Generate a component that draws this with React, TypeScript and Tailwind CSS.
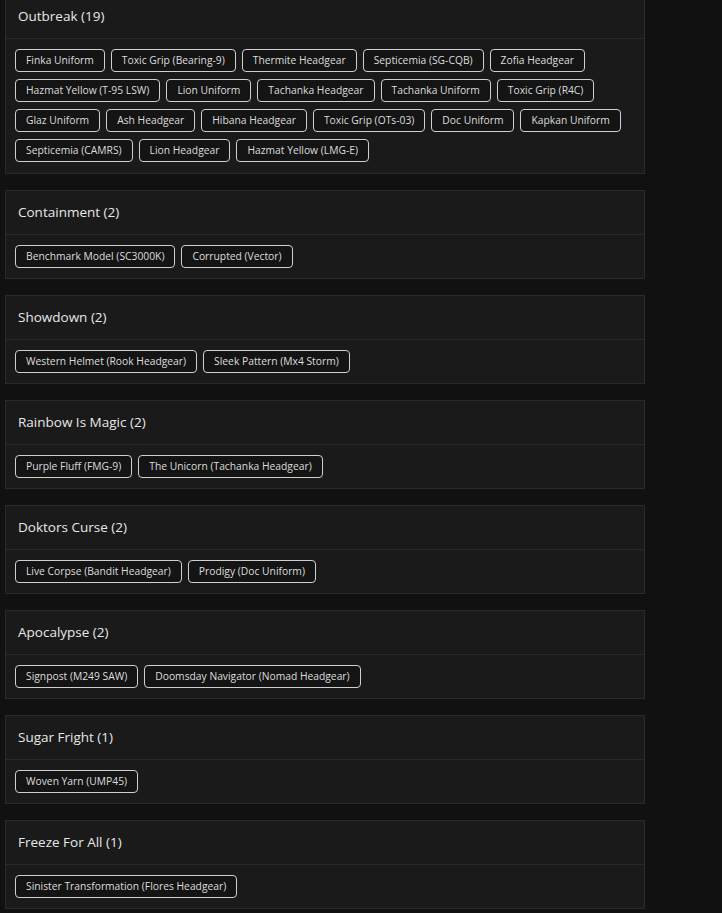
import React from "react";

const groups: { title: string; items: string[] }[] = [
  {
    title: "Outbreak (19)",
    items: [
      "Finka Uniform",
      "Toxic Grip (Bearing-9)",
      "Thermite Headgear",
      "Septicemia (SG-CQB)",
      "Zofia Headgear",
      "Hazmat Yellow (T-95 LSW)",
      "Lion Uniform",
      "Tachanka Headgear",
      "Tachanka Uniform",
      "Toxic Grip (R4C)",
      "Glaz Uniform",
      "Ash Headgear",
      "Hibana Headgear",
      "Toxic Grip (OTs-03)",
      "Doc Uniform",
      "Kapkan Uniform",
      "Septicemia (CAMRS)",
      "Lion Headgear",
      "Hazmat Yellow (LMG-E)",
    ],
  },
  { title: "Containment (2)", items: ["Benchmark Model (SC3000K)", "Corrupted (Vector)"] },
  { title: "Showdown (2)", items: ["Western Helmet (Rook Headgear)", "Sleek Pattern (Mx4 Storm)"] },
  { title: "Rainbow Is Magic (2)", items: ["Purple Fluff (FMG-9)", "The Unicorn (Tachanka Headgear)"] },
  { title: "Doktors Curse (2)", items: ["Live Corpse (Bandit Headgear)", "Prodigy (Doc Uniform)"] },
  { title: "Apocalypse (2)", items: ["Signpost (M249 SAW)", "Doomsday Navigator (Nomad Headgear)"] },
  { title: "Sugar Fright (1)", items: ["Woven Yarn (UMP45)"] },
  { title: "Freeze For All (1)", items: ["Sinister Transformation (Flores Headgear)"] },
];

export default function App() {
  return (
    <div
      className="min-h-[913px] w-full bg-[#111111] overflow-hidden"
      style={{ fontFamily: '"Open Sans", "Liberation Sans", sans-serif' }}
    >
      <div className="ml-[5px] mt-[-6px] flex w-[640px] flex-col gap-[16px]">
        {groups.map((g, i) => (
          <div key={g.title} className="border border-[#2a2a2a] bg-[#1a1a1a]">
            <div className="flex h-[44px] items-center border-b border-[#2a2a2a] px-[12px] text-[13.5px] font-medium text-[#e8e8e8]">
              {g.title}
            </div>
            <div
              className={
                i === 0
                  ? "flex flex-wrap gap-x-[6px] gap-y-[7px] px-[9px] pt-[10px] pb-[11px]"
                  : "flex flex-wrap gap-x-[6px] gap-y-[7px] px-[9px] py-[10px]"
              }
            >
              {g.items.map((it) => (
                <span
                  key={it}
                  className="flex h-[23px] items-center rounded-[4px] border border-[#cfcfcf] bg-[#141414] px-[10px] text-[10.3px] text-[#dddddd]"
                >
                  {it}
                </span>
              ))}
            </div>
          </div>
        ))}
      </div>
    </div>
  );
}
